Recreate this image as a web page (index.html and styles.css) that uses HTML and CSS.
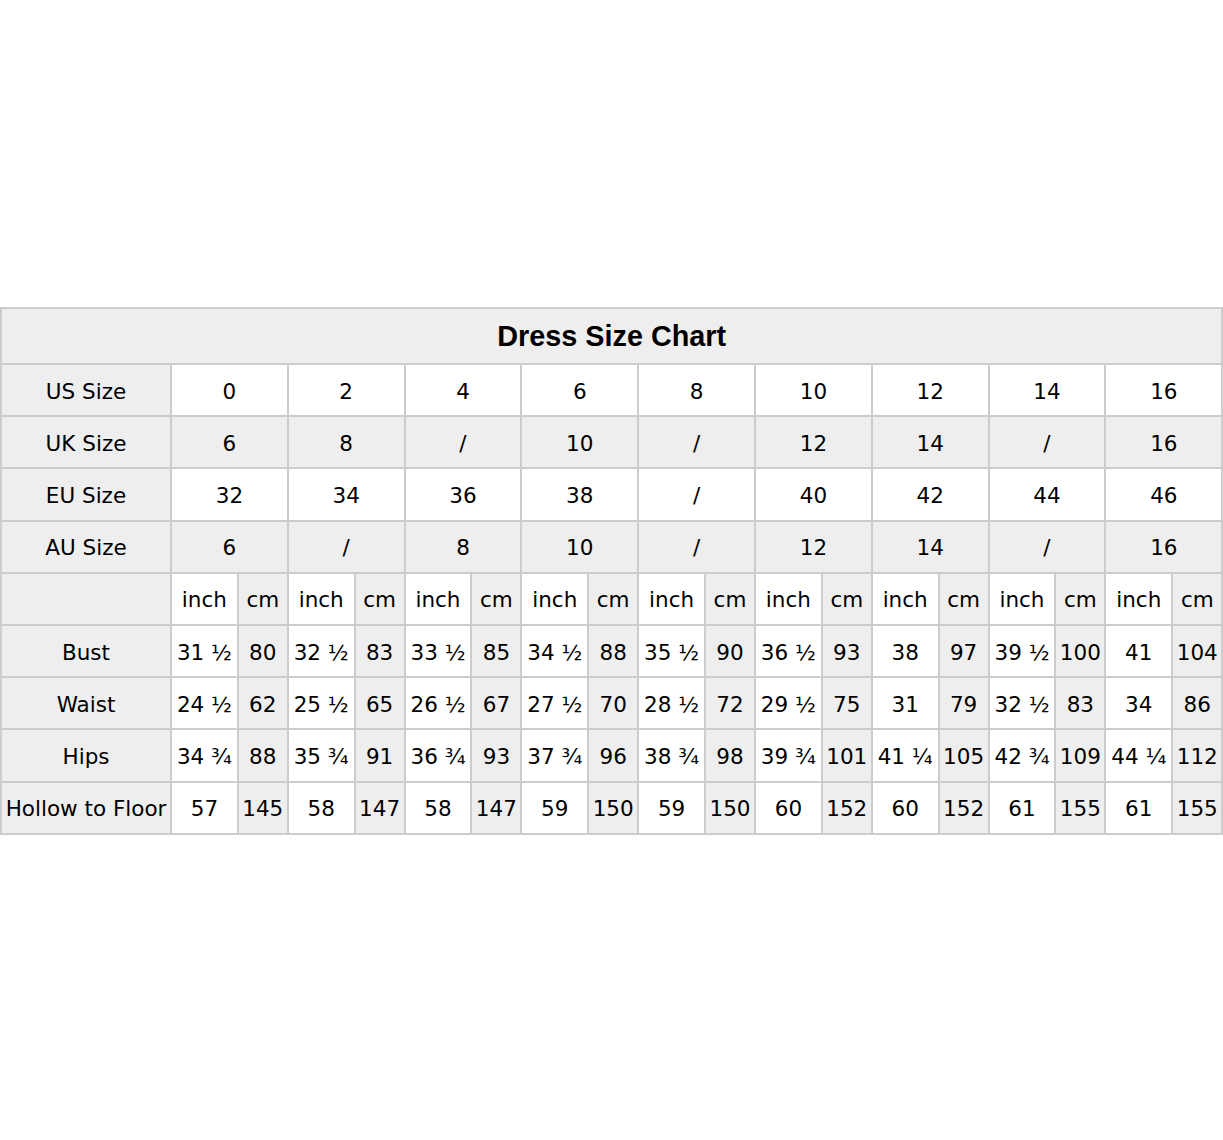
FILE: index.html
```html
<!DOCTYPE html>
<html lang="en">
<head>
<meta charset="utf-8">
<title>Dress Size Chart</title>
<link rel="stylesheet" href="styles.css">
</head>
<body>
<main class="page">
<table class="chart">
<colgroup>
<col class="c-label">
<col class="c-in"><col class="c-cm">
<col class="c-in"><col class="c-cm">
<col class="c-in"><col class="c-cm">
<col class="c-in"><col class="c-cm">
<col class="c-in"><col class="c-cm">
<col class="c-in"><col class="c-cm">
<col class="c-in"><col class="c-cm">
<col class="c-in"><col class="c-cm">
<col class="c-in"><col class="c-cm">
</colgroup>
<thead>
<tr class="title-row"><th colspan="19" class="title">Dress Size Chart</th></tr>
</thead>
<tbody>
<tr class="size-row white">
<td class="label">US Size</td>
<td colspan="2">0</td><td colspan="2">2</td><td colspan="2">4</td><td colspan="2">6</td><td colspan="2">8</td><td colspan="2">10</td><td colspan="2">12</td><td colspan="2">14</td><td colspan="2">16</td>
</tr>
<tr class="size-row grey">
<td class="label">UK Size</td>
<td colspan="2">6</td><td colspan="2">8</td><td colspan="2">/</td><td colspan="2">10</td><td colspan="2">/</td><td colspan="2">12</td><td colspan="2">14</td><td colspan="2">/</td><td colspan="2">16</td>
</tr>
<tr class="size-row white">
<td class="label">EU Size</td>
<td colspan="2">32</td><td colspan="2">34</td><td colspan="2">36</td><td colspan="2">38</td><td colspan="2">/</td><td colspan="2">40</td><td colspan="2">42</td><td colspan="2">44</td><td colspan="2">46</td>
</tr>
<tr class="size-row grey">
<td class="label">AU Size</td>
<td colspan="2">6</td><td colspan="2">/</td><td colspan="2">8</td><td colspan="2">10</td><td colspan="2">/</td><td colspan="2">12</td><td colspan="2">14</td><td colspan="2">/</td><td colspan="2">16</td>
</tr>
<tr class="measure-row">
<td class="label"></td>
<td class="in">inch</td><td class="cm">cm</td>
<td class="in">inch</td><td class="cm">cm</td>
<td class="in">inch</td><td class="cm">cm</td>
<td class="in">inch</td><td class="cm">cm</td>
<td class="in">inch</td><td class="cm">cm</td>
<td class="in">inch</td><td class="cm">cm</td>
<td class="in">inch</td><td class="cm">cm</td>
<td class="in">inch</td><td class="cm">cm</td>
<td class="in">inch</td><td class="cm">cm</td>
</tr>
<tr class="measure-row">
<td class="label">Bust</td>
<td class="in">31 ½</td><td class="cm">80</td>
<td class="in">32 ½</td><td class="cm">83</td>
<td class="in">33 ½</td><td class="cm">85</td>
<td class="in">34 ½</td><td class="cm">88</td>
<td class="in">35 ½</td><td class="cm">90</td>
<td class="in">36 ½</td><td class="cm">93</td>
<td class="in">38</td><td class="cm">97</td>
<td class="in">39 ½</td><td class="cm">100</td>
<td class="in">41</td><td class="cm">104</td>
</tr>
<tr class="measure-row">
<td class="label">Waist</td>
<td class="in">24 ½</td><td class="cm">62</td>
<td class="in">25 ½</td><td class="cm">65</td>
<td class="in">26 ½</td><td class="cm">67</td>
<td class="in">27 ½</td><td class="cm">70</td>
<td class="in">28 ½</td><td class="cm">72</td>
<td class="in">29 ½</td><td class="cm">75</td>
<td class="in">31</td><td class="cm">79</td>
<td class="in">32 ½</td><td class="cm">83</td>
<td class="in">34</td><td class="cm">86</td>
</tr>
<tr class="measure-row">
<td class="label">Hips</td>
<td class="in">34 ¾</td><td class="cm">88</td>
<td class="in">35 ¾</td><td class="cm">91</td>
<td class="in">36 ¾</td><td class="cm">93</td>
<td class="in">37 ¾</td><td class="cm">96</td>
<td class="in">38 ¾</td><td class="cm">98</td>
<td class="in">39 ¾</td><td class="cm">101</td>
<td class="in">41 ¼</td><td class="cm">105</td>
<td class="in">42 ¾</td><td class="cm">109</td>
<td class="in">44 ¼</td><td class="cm">112</td>
</tr>
<tr class="measure-row">
<td class="label">Hollow to Floor</td>
<td class="in">57</td><td class="cm">145</td>
<td class="in">58</td><td class="cm">147</td>
<td class="in">58</td><td class="cm">147</td>
<td class="in">59</td><td class="cm">150</td>
<td class="in">59</td><td class="cm">150</td>
<td class="in">60</td><td class="cm">152</td>
<td class="in">60</td><td class="cm">152</td>
<td class="in">61</td><td class="cm">155</td>
<td class="in">61</td><td class="cm">155</td>
</tr>
</tbody>
</table>
</main>
</body>
</html>
```

FILE: styles.css
```css
html, body {
  margin: 0;
  padding: 0;
  background: #ffffff;
}

.page {
  padding-top: 307px;
}

.chart {
  width: 1222px;
  table-layout: fixed;
  border-collapse: collapse;
  font-family: "DejaVu Sans", Verdana, sans-serif;
  font-size: 21.5px;
  color: #000000;
}

.c-label { width: 170px; }
.c-in { width: 66.8px; }
.c-cm { width: 50px; }

.chart th,
.chart td {
  border: 2px solid #cccccc;
  text-align: center;
  vertical-align: middle;
  padding: 0;
  white-space: nowrap;
  overflow: hidden;
}

.title {
  height: 54px;
  background: #eeeeee;
  font-family: "Liberation Sans", Arial, sans-serif;
  font-weight: bold;
  font-size: 28.8px;
}

.chart td {
  height: 48.2px;
  padding-top: 2px;
}

.label {
  background: #eeeeee;
}

.size-row.white td { background: #ffffff; }
.size-row.grey td { background: #eeeeee; }
.size-row td.label { background: #eeeeee; }

.measure-row .in { background: #ffffff; }
.measure-row .cm { background: #eeeeee; }
```
